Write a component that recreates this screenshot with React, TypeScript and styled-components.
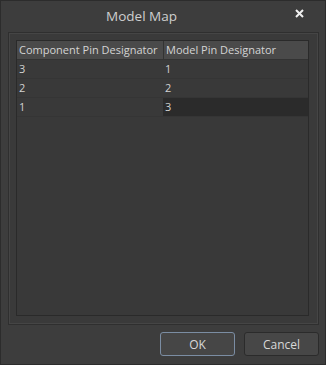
import styled, { createGlobalStyle } from 'styled-components';

const GlobalStyle = createGlobalStyle`
  html, body {
    margin: 0;
    padding: 0;
    background: #3d3d3d;
  }
  body {
    font-family: "Open Sans", "Noto Sans", sans-serif;
  }
`;

interface PinRow {
  component: string;
  model: string;
}

const ROWS: PinRow[] = [
  { component: '3', model: '1' },
  { component: '2', model: '2' },
  { component: '1', model: '3' },
];

const SELECTED = 2;

function App() {
  return (
    <>
      <GlobalStyle />
      <Dialog>
        <TitleBar>
          <Title>Model Map</Title>
          <CloseButton aria-label="close">
            <svg width="9" height="9" viewBox="0 0 9 9">
              <path d="M1 1L8 8M8 1L1 8" stroke="#f0f0f0" strokeWidth="2" />
            </svg>
          </CloseButton>
        </TitleBar>
        <Body>
          <Group>
            <Table>
              <HeaderRow>
                <HeaderCell>Component Pin Designator</HeaderCell>
                <HeaderCell divider>Model Pin Designator</HeaderCell>
              </HeaderRow>
              {ROWS.map((row, i) => (
                <Row key={i}>
                  <Cell>{row.component}</Cell>
                  <Cell selected={i === SELECTED}>{row.model}</Cell>
                </Row>
              ))}
            </Table>
          </Group>
          <Footer>
            <Button primary>OK</Button>
            <Button>Cancel</Button>
          </Footer>
        </Body>
      </Dialog>
    </>
  );
}

const Dialog = styled.div`
  width: 326px;
  height: 365px;
  box-sizing: border-box;
  border: 1px solid #2c2c2c;
  background: #3d3d3d;
  display: flex;
  flex-direction: column;
`;

const TitleBar = styled.div`
  height: 29px;
  display: flex;
  align-items: center;
  position: relative;
  padding-right: 40px;
`;

const Title = styled.div`
  flex: 1;
  text-align: center;
  color: #cfcfcf;
  font-size: 13.5px;
  margin-left: -3px;
`;

const CloseButton = styled.div`
  position: absolute;
  right: 21px;
  top: 8px;
  width: 9px;
  height: 9px;
  display: flex;
`;

const Body = styled.div`
  flex: 1;
  display: flex;
  flex-direction: column;
  padding: 2px 6px 7px 7px;
`;

const Group = styled.div`
  height: 293px;
  box-sizing: border-box;
  border: 1px solid #2f2f2f;
  box-shadow: inset 0 0 0 1px #454545;
  background: #3a3a3a;
  padding: 7px 9px 8px 7px;
  display: flex;
`;

const Table = styled.div`
  flex: 1;
  border: 1px solid #2a2a2a;
  background: #393939;
  display: flex;
  flex-direction: column;
`;

const HeaderRow = styled.div`
  display: grid;
  grid-template-columns: 146px 1fr;
  height: 18px;
  background: #4a4a4a;
  border-bottom: 1px solid #333;
`;

const HeaderCell = styled.div<{ divider?: boolean }>`
  color: #d4d4d4;
  font-size: 11px;
  line-height: 18px;
  padding-left: 2px;
  white-space: nowrap;
  overflow: hidden;
  border-left: ${({ divider }) => (divider ? '1px solid #333' : 'none')};
`;

const Row = styled.div`
  display: grid;
  grid-template-columns: 146px 1fr;
  height: 18px;
  border-bottom: 1px solid #353535;
`;

const Cell = styled.div<{ selected?: boolean }>`
  color: #d2d2d2;
  font-size: 11px;
  line-height: 18px;
  padding-left: 2px;
  background: ${({ selected }) => (selected ? '#2b2b2b' : 'transparent')};
`;

const Footer = styled.div`
  display: flex;
  justify-content: flex-end;
  gap: 9px;
  padding-top: 7px;
`;

const Button = styled.div<{ primary?: boolean }>`
  width: 75px;
  height: 24px;
  box-sizing: border-box;
  border-radius: 3px;
  border: 1px solid ${({ primary }) => (primary ? '#7b8da3' : '#2b2b2b')};
  background: ${({ primary }) => (primary ? '#464646' : '#474747')};
  color: #d8d8d8;
  font-size: 12px;
  display: flex;
  align-items: center;
  justify-content: center;
`;

export default App;
